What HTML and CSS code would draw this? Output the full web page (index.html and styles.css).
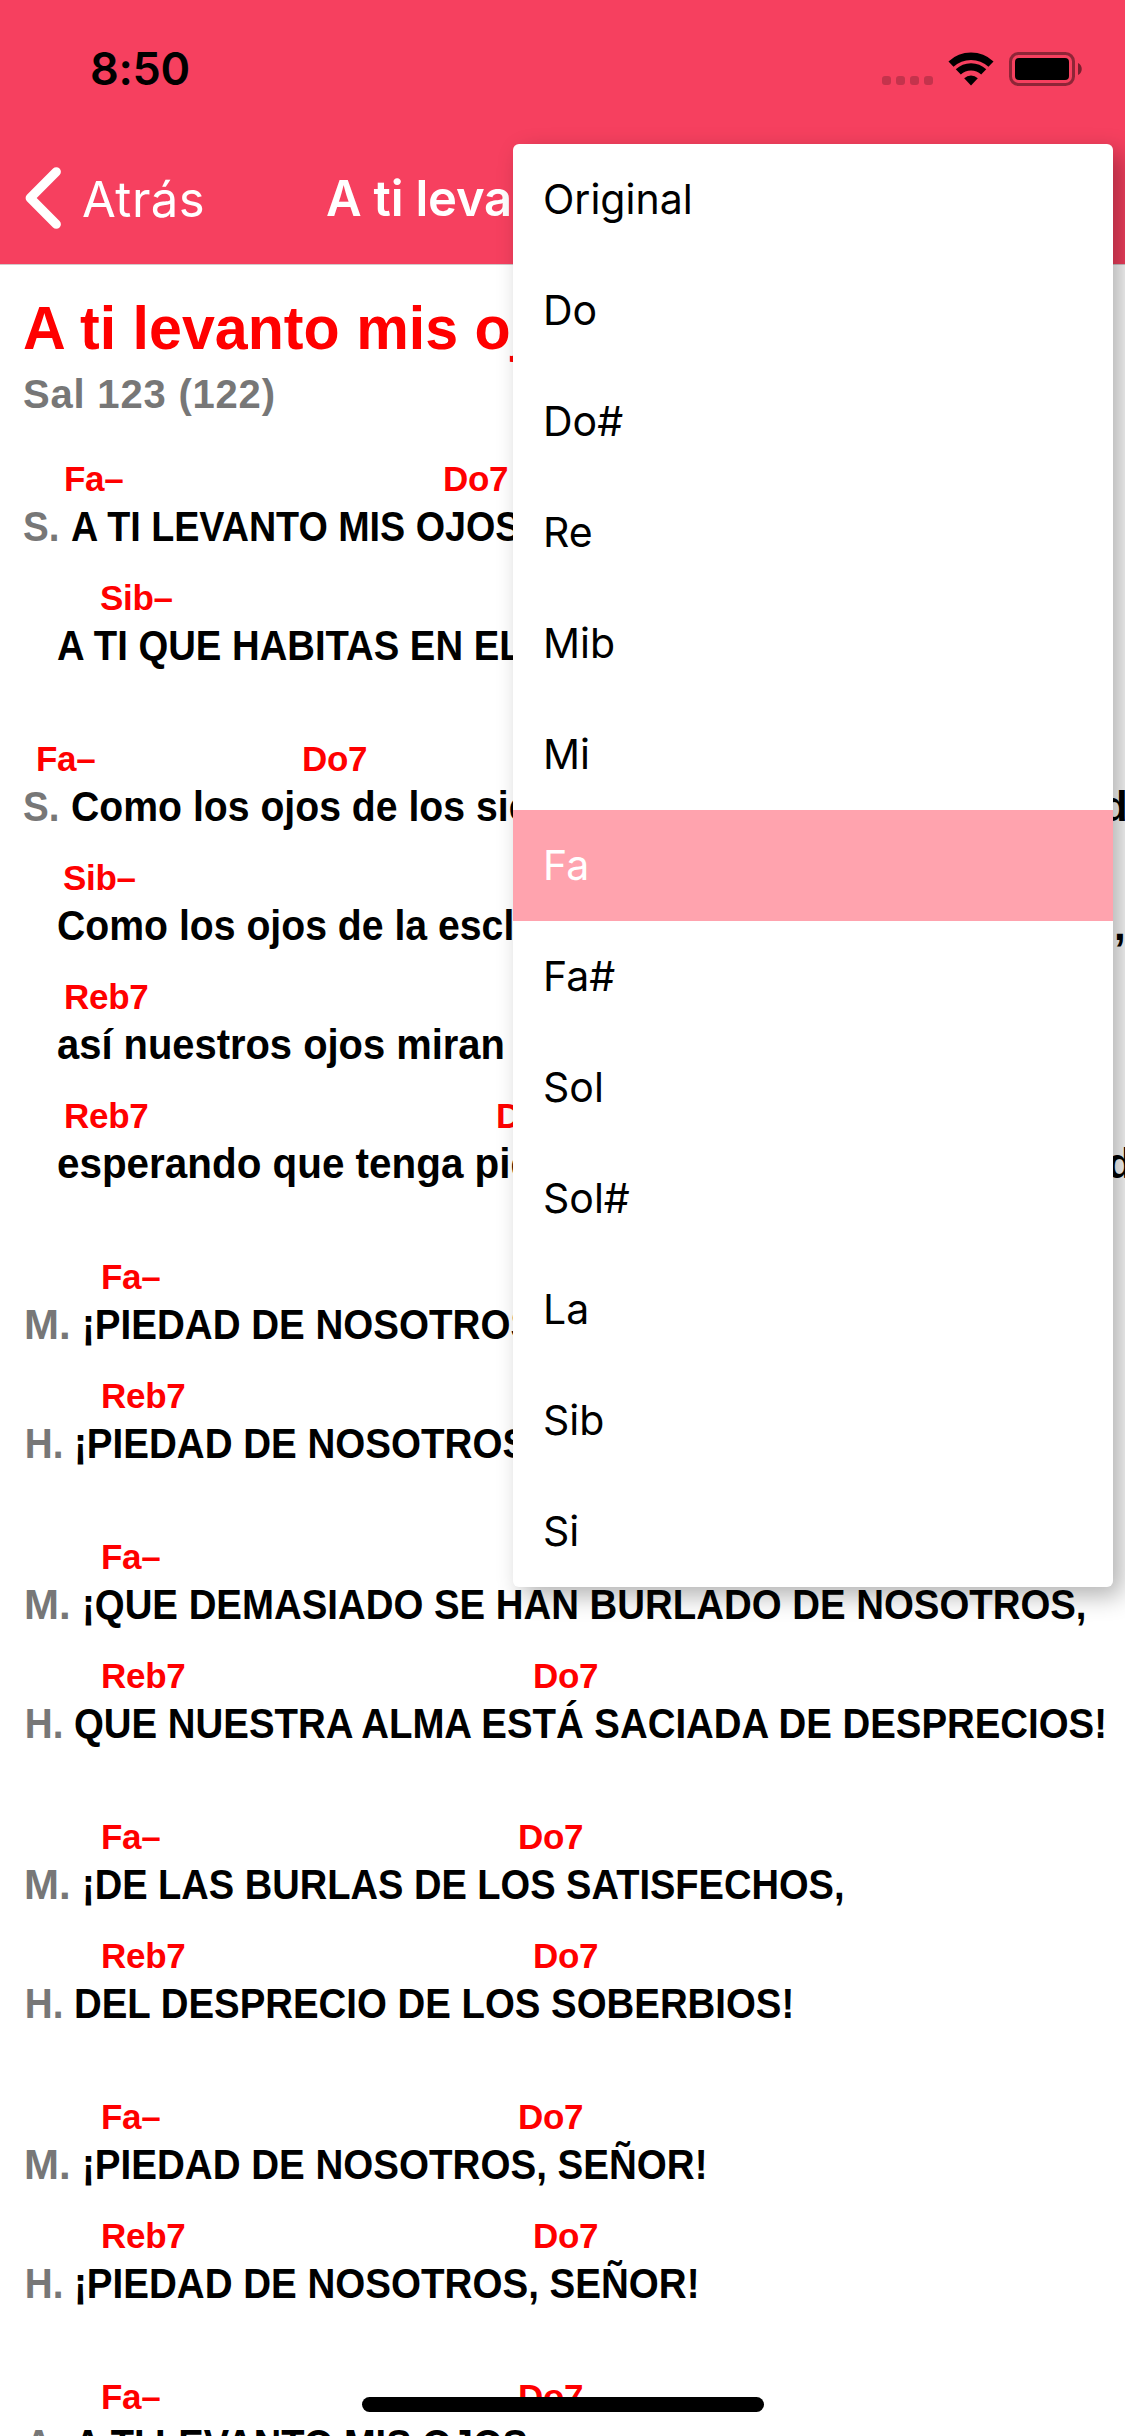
FILE: index.html
```html
<!DOCTYPE html>
<html lang="es">
<head>
<meta charset="utf-8">
<title>A ti levanto mis ojos</title>
<link rel="stylesheet" href="styles.css">
</head>
<body>
<header class="header">
  <div class="status">
    <span class="time">8:50</span>
    <div class="indicators">
      <span class="signal"><i></i><i></i><i></i><i></i></span>
      <svg class="wifi" width="46" height="34" viewBox="0 0 46 34">
        <path d="M3 12.1A29.3 29.3 0 0 1 43 12.1M10.3 19.9A18.6 18.6 0 0 1 35.7 19.9" fill="none" stroke="#000" stroke-width="7.4"/>
        <path d="M16.2 26.2A10 10 0 0 1 29.8 26.2L23 33.4Z"/>
      </svg>
      <svg class="battery" width="74" height="34" viewBox="0 0 74 34">
        <rect x="1.5" y="1.5" width="63" height="31" rx="8" fill="none" stroke="#000" stroke-opacity=".42" stroke-width="3"/>
        <rect x="6" y="6" width="54" height="22" rx="4"/>
        <path d="M69 11C74 13 74 21 69 23Z" fill-opacity=".5"/>
      </svg>
    </div>
  </div>
  <nav class="nav">
    <svg class="chevron" width="37" height="62" viewBox="0 0 37 62">
      <path d="M32.3 4.8L6.2 31L32.3 57.2" fill="none" stroke="#fff" stroke-width="9.2" stroke-linecap="round" stroke-linejoin="round"/>
    </svg>
    <span class="back">Atrás</span>
    <span class="title">A ti leva</span>
  </nav>
</header>

<main class="song">
  <h1 class="name">A ti levanto mis oj</h1>
  <p class="source">Sal 123 (122)</p>

  <section class="stanza">
    <div class="chords at-opening"><span>Fa–</span><span>Do7</span></div>
    <div class="line"><b class="voice s">S.</b><span class="lyric w90">A TI LEVANTO MIS OJOS</span></div>
    <div class="chords at-heaven"><span>Sib–</span></div>
    <div class="line rest"><span class="lyric w91">A TI QUE HABITAS EN EL</span></div>
  </section>

  <section class="stanza">
    <div class="chords at-servants"><span>Fa–</span><span>Do7</span></div>
    <div class="line"><b class="voice s">S.</b><span class="lyric w93">Como los ojos de los sie</span><span class="tail tail-d">d</span></div>
    <div class="chords at-slave"><span>Sib–</span></div>
    <div class="line rest"><span class="lyric w93">Como los ojos de la escl</span><span class="tail tail-comma">,</span></div>
    <div class="chords at-look"><span>Reb7</span></div>
    <div class="line rest"><span class="lyric w95">así nuestros ojos miran</span></div>
    <div class="chords at-waiting"><span>Reb7</span><span>D</span></div>
    <div class="line rest"><span class="lyric w96">esperando que tenga pie</span><span class="tail tail-de">d</span></div>
  </section>

  <section class="stanza">
    <div class="chords at-women"><span>Fa–</span></div>
    <div class="line"><b class="voice m">M.</b><span class="lyric w917">¡PIEDAD DE NOSOTROS</span></div>
    <div class="chords at-men"><span>Reb7</span></div>
    <div class="line"><b class="voice h">H.</b><span class="lyric w917">¡PIEDAD DE NOSOTROS</span></div>
  </section>

  <section class="stanza">
    <div class="chords at-women"><span>Fa–</span></div>
    <div class="line"><b class="voice m">M.</b><span class="lyric w914">¡QUE DEMASIADO SE HAN BURLADO DE NOSOTROS,</span></div>
    <div class="chords at-men"><span>Reb7</span><span>Do7</span></div>
    <div class="line"><b class="voice h">H.</b><span class="lyric w914">QUE NUESTRA ALMA ESTÁ SACIADA DE DESPRECIOS!</span></div>
  </section>

  <section class="stanza">
    <div class="chords at-women"><span>Fa–</span><span>Do7</span></div>
    <div class="line"><b class="voice m">M.</b><span class="lyric w906">¡DE LAS BURLAS DE LOS SATISFECHOS,</span></div>
    <div class="chords at-men"><span>Reb7</span><span>Do7</span></div>
    <div class="line"><b class="voice h">H.</b><span class="lyric w914">DEL DESPRECIO DE LOS SOBERBIOS!</span></div>
  </section>

  <section class="stanza">
    <div class="chords at-women"><span>Fa–</span><span>Do7</span></div>
    <div class="line"><b class="voice m">M.</b><span class="lyric w917">¡PIEDAD DE NOSOTROS, SEÑOR!</span></div>
    <div class="chords at-men"><span>Reb7</span><span>Do7</span></div>
    <div class="line"><b class="voice h">H.</b><span class="lyric w917">¡PIEDAD DE NOSOTROS, SEÑOR!</span></div>
  </section>

  <section class="stanza">
    <div class="chords at-women"><span>Fa–</span><span>Do7</span></div>
    <div class="line"><b class="voice a">A.</b><span class="lyric w906">A TI LEVANTO MIS OJOS</span></div>
  </section>
</main>

<ul class="menu">
  <li>Original</li>
  <li>Do</li>
  <li>Do#</li>
  <li>Re</li>
  <li>Mib</li>
  <li>Mi</li>
  <li class="selected">Fa</li>
  <li>Fa#</li>
  <li>Sol</li>
  <li>Sol#</li>
  <li>La</li>
  <li>Sib</li>
  <li>Si</li>
</ul>
<div class="home-indicator"></div>
</body>
</html>
```
FILE: styles.css
```css
* { box-sizing: border-box; margin: 0; padding: 0; }

body {
  position: relative;
  width: 1125px;
  height: 2436px;
  overflow: hidden;
  background: #fff;
  color: #000;
  font-family: "Liberation Sans", sans-serif;
}

/* Status bar and navigation */
.header {
  height: 265px;
  background: #f6405f;
  border-bottom: 1px solid #d2c8ca;
  font-family: Inter, sans-serif;
}
.status {
  display: flex;
  justify-content: space-between;
  height: 132px;
  padding: 42px 42px 0 90px;
}
.time { font-size: 45px; font-weight: 600; line-height: 54px; letter-spacing: -.3px; }
.indicators { display: flex; align-items: flex-start; padding-top: 10px; }
.signal { display: flex; gap: 5px; margin: 24px 15px 0 0; }
.signal i { width: 9px; height: 9px; border-radius: 3px; background: rgba(0, 0, 0, .2); }
.battery { margin-left: 15px; }
.nav {
  display: flex;
  align-items: center;
  height: 132px;
  padding-left: 24px;
  color: #fff;
  font-size: 49px;
  line-height: 60px;
  white-space: nowrap;
}
.back { width: 244px; margin-left: 21px; padding-top: 3px; letter-spacing: .5px; }
.title { padding-top: 2px; font-weight: 600; letter-spacing: -.2px; }

/* Song sheet */
.song { height: 2171px; padding: 28px 0 0 23px; overflow: hidden; white-space: nowrap; }
.name {
  color: #f00;
  font-size: 61px;
  line-height: 70px;
  transform: scaleX(.97);
  transform-origin: left;
}
.source {
  margin: 8px 0 39px;
  color: #777;
  font-size: 40px;
  font-weight: 700;
  line-height: 46px;
  letter-spacing: .8px;
}
.stanza { padding-bottom: 42px; }
.chords {
  display: grid;
  height: 46px;
  color: #f00;
  font-size: 35px;
  font-weight: 700;
  line-height: 46px;
  letter-spacing: -.3px;
}
.at-opening { padding-left: 41px; grid-template-columns: 379px auto; }
.at-heaven { padding-left: 77px; }
.at-servants { padding-left: 13px; grid-template-columns: 266px auto; }
.at-slave { padding-left: 40px; }
.at-look { padding-left: 41px; }
.at-waiting { padding-left: 41px; grid-template-columns: 432px auto; }
.at-women { padding-left: 78px; grid-template-columns: 417px auto; }
.at-men { padding-left: 78px; grid-template-columns: 432px auto; }

.line {
  display: flex;
  height: 50px;
  margin-bottom: 23px;
  font-size: 42px;
  font-weight: 700;
  line-height: 50px;
}
.rest { padding-left: 34px; }
.voice { flex: none; color: #777; transform: scaleX(.92); transform-origin: left; }
.s { width: 48px; }
.m { width: 59px; padding-left: 1px; transform: none; }
.h { width: 51px; padding-left: 2px; }
.a { width: 51px; padding-left: 2px; }

/* Condensed lettering */
.lyric { transform-origin: left; }
.w90 { transform: scaleX(.897); }
.w906 { transform: scaleX(.906); }
.w91 { transform: scaleX(.911); }
.w914 { transform: scaleX(.914); }
.w917 { transform: scaleX(.918); }
.w93 { transform: scaleX(.933); }
.w95 { transform: scaleX(.95); }
.w96 { transform: scaleX(.962); }
.tail { margin-left: auto; }
.tail-d { width: 23px; }
.tail-comma { width: 11px; }
.tail-de { width: 18px; }

/* Key picker */
.menu {
  position: absolute;
  top: 144px;
  left: 513px;
  width: 600px;
  overflow: hidden;
  border-radius: 6px;
  background: #fff;
  box-shadow: 9px 9px 24px rgba(0, 0, 0, .3);
  font: 400 41px/111px Inter, sans-serif;
  list-style: none;
}
.menu li { height: 111px; padding-left: 30px; }
.menu .selected { background: #ffa3ae; color: #fff; }

.home-indicator {
  position: absolute;
  top: 2397px;
  left: 362px;
  width: 402px;
  height: 15px;
  border-radius: 8px;
  background: #000;
}
```
